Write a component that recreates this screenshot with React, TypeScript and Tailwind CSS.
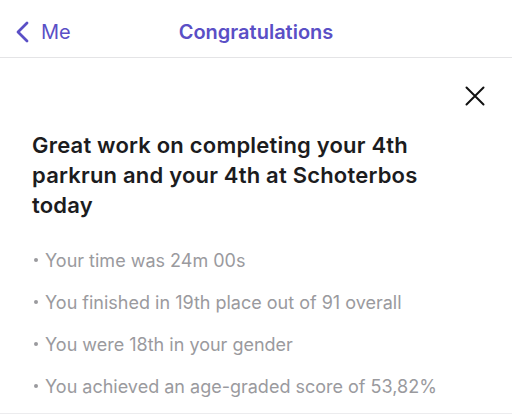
import React from "react";

export default function App() {
  const items = [
    "Your time was 24m 00s",
    "You finished in 19th place out of 91 overall",
    "You were 18th in your gender",
    "You achieved an age-graded score of 53,82%",
  ];
  return (
    <div className="w-[512px] h-[414px] bg-white overflow-hidden flex flex-col" style={{ fontFamily: "Inter, 'Noto Sans', sans-serif" }}>
      <div className="h-[58px] border-b border-[#e4e4e6] flex items-center relative shrink-0">
        <div className="flex items-center pl-[15px] pt-[6px] text-[#5a4fc6]">
          <svg width="14" height="22" viewBox="0 0 14 22" fill="none">
            <path d="M12 2 L3 11 L12 20" stroke="#5a4fc6" strokeWidth="2.8" strokeLinecap="round" strokeLinejoin="round" />
          </svg>
          <span className="ml-[12px] text-[20px] leading-none">Me</span>
        </div>
        <div className="absolute left-0 right-0 top-[6px] bottom-0 flex items-center justify-center pointer-events-none">
          <span className="text-[20px] font-semibold text-[#5a4fc6] leading-none">Congratulations</span>
        </div>
      </div>
      <div className="flex justify-end pr-[27px] pt-[28px]">
        <svg width="20" height="20" viewBox="0 0 20 20" fill="none">
          <path d="M1.5 1.5 L18.5 18.5 M18.5 1.5 L1.5 18.5" stroke="#111" strokeWidth="2" strokeLinecap="round" />
        </svg>
      </div>
      <h1 className="pl-[32px] pt-[24px] text-[22px] font-semibold leading-[30px] text-[#1c1c1e] pr-[70px] tracking-[0.2px]">
        Great work on completing your 4th parkrun and your 4th at Schoterbos today
      </h1>
      <ul className="pl-[31px] pt-[19px] flex flex-col">
        {items.map((t) => (
          <li key={t} className="h-[42px] flex items-center text-[18px] text-[#9a9a9e]">
            <span className="w-[14px] flex items-center">
              <span className="w-[4px] h-[4px] rounded-full bg-[#9a9a9e] ml-[3px]" />
            </span>
            <span>{t}</span>
          </li>
        ))}
      </ul>
      <div className="flex-1" />
      <div className="h-px bg-[#ececee]" />
    </div>
  );
}
